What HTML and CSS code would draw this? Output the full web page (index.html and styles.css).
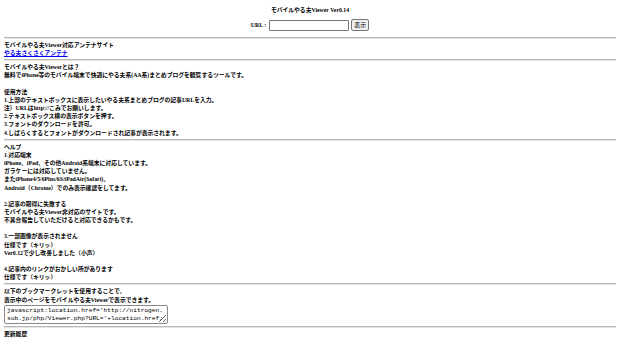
FILE: index.html
```html
<!DOCTYPE html>
<html lang="ja">
<head>
  <meta charset="UTF-8" />
  <title>モバイルやる夫Viewer Ver0.14</title>
  <link rel="stylesheet" href="styles.css">
</head>
<body>
<header>
  <div class="title">モバイルやる夫Viewer Ver0.14</div>
  <form class="url-form">
    <label for="url">URL :</label>
    <input type="text" id="url" name="URL" />
    <button type="submit">表示</button>
  </form>
</header>

<hr class="rule-top">
<section class="block">
  モバイルやる夫Viewer対応アンテナサイト<br>
  <a href="#">やる夫さくさくアンテナ</a>
</section>

<hr>
<section class="block">
  モバイルやる夫Viewerとは？<br>
  無料でiPhone等のモバイル端末で快適にやる夫系(AA系)まとめブログを観覧するツールです。<br>
  <br>
  使用方法<br>
  1.上部のテキストボックスに表示したいやる夫系まとめブログの記事URLを入力。<br>
  注）URLはhttp://こみでお願いします。<br>
  2.テキストボックス横の表示ボタンを押す。<br>
  3.フォントのダウンロードを許可。<br>
  4.しばらくするとフォントがダウンロードされ記事が表示されます。
</section>

<hr>
<section class="block">
  ヘルプ<br>
  1.対応端末<br>
  iPhone、iPad、その他Android系端末に対応しています。<br>
  ガラケーには対応していません。<br>
  またiPhone4/5/6Plus/6S/iPadAir(Safari)、<br>
  Android（Chrome）でのみ表示確認をしてます。<br>
  <br>
  2.記事の取得に失敗する<br>
  モバイルやる夫Viewer非対応のサイトです。<br>
  不具合報告していただけると対応できるかもです。<br>
  <br>
  3.一部画像が表示されません<br>
  仕様です（キリッ）<br>
  Ver0.12で少し改善しました（小声）<br>
  <br>
  4.記事内のリンクがおかしい所があります<br>
  仕様です（キリッ）
</section>

<hr>
<section class="block">
  以下のブックマークレットを使用することで、<br>
  表示中のページをモバイルやる夫Viewerで表示できます。<br>
  <textarea class="bookmarklet" rows="2">javascript:location.href='http://nitrogen.sub.jp/php/Viewer.php?URL='+location.href;</textarea>
</section>

<hr>
<section class="block">
  更新履歴
</section>
</body>
</html>
```

FILE: styles.css
```css
/* base */
body {
  margin: 0 4px;
  background: #fff;
  color: #000;
  font-family: "Liberation Serif", "Noto Sans CJK JP", serif;
  font-size: 5.8px;
  font-weight: bold;
  line-height: 8.15px;
}
header {
  text-align: center;
  padding-top: 6px;
}
.title {
  height: 8px;
}
.url-form {
  display: flex;
  justify-content: center;
  align-items: center;
  gap: 2px;
  margin-top: 5px;
  height: 12px;
}
.url-form label {
  margin-right: 1px;
}
.url-form input {
  width: 76px;
  height: 9px;
  padding: 0 1px;
  border: 1px solid #767676;
  border-radius: 1px;
  font-size: 6px;
}
.url-form button {
  height: 12px;
  padding: 0 2px;
  background: #efefef;
  border: 1px solid #767676;
  border-radius: 2px;
  font-family: "Noto Sans CJK JP", sans-serif;
  font-size: 6px;
  line-height: 10px;
  color: #000;
}
hr {
  margin: 2px 0 1px 0;
  height: 0;
  border: none;
  border-top: 1px solid #b8b8b8;
  border-bottom: 1px solid #e4e4e4;
}
hr.rule-top {
  margin-top: 6px;
  margin-bottom: 1px;
}
.block {
  padding: 1px 0 0 0;
}
.block a {
  color: #0000ee;
}
.bookmarklet {
  display: block;
  box-sizing: border-box;
  width: 164px;
  height: 19px;
  margin: 1px 0 0 0;
  padding: 1px 2px;
  border: 1px solid #888;
  border-radius: 2px;
  font-family: "Liberation Mono", monospace;
  font-size: 6.2px;
  font-weight: normal;
  line-height: 8px;
  resize: both;
  overflow: hidden;
}
```
